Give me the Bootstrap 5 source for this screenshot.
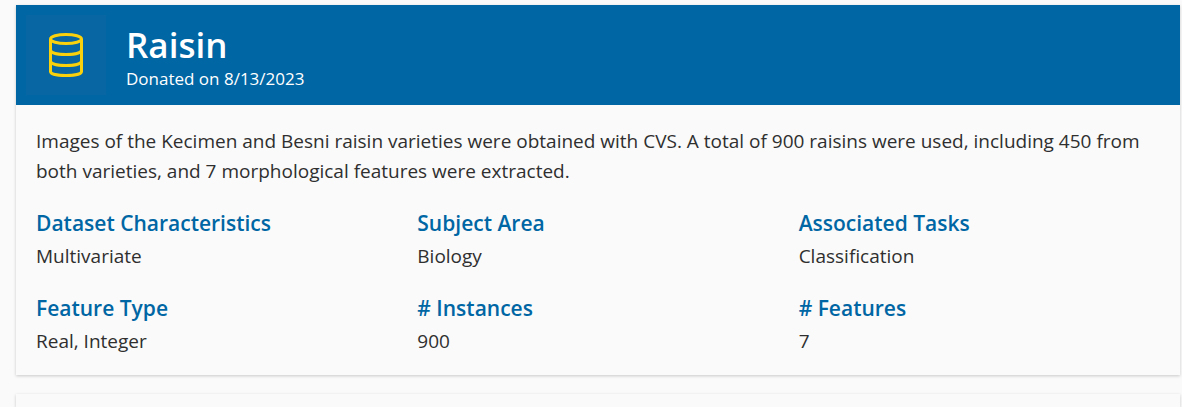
<!DOCTYPE html>
<html lang="en">
<head>
<meta charset="utf-8">
<meta name="viewport" content="width=device-width, initial-scale=1">
<title>Raisin</title>
<link href="https://cdn.jsdelivr.net/npm/bootstrap@5.3.0/dist/css/bootstrap.min.css" rel="stylesheet">
<style>
body{background:#fafafa;color:#2f2f2f;font-family:"Segoe UI","Open Sans","Noto Sans",sans-serif;font-size:19px;line-height:30px}
main{padding:5px 2px 0 16px}
.panel{background:#fafafa;box-shadow:0 1px 3px rgba(0,0,0,.2)}
.hero{background:#0066a4;color:#fff;padding:10px 20px 10px 10px;gap:20px}
.thumb{width:80px;height:80px;background:#0866a2}
.hero h1{font-size:35px;line-height:44px;font-weight:600}
.hero p{font-size:17px;line-height:24px}
.about{padding:21px 20px 19px}
.about > p{margin-bottom:22px}
.facts{--bs-gutter-x:20px;row-gap:22px}
.facts h2{font-size:21px;line-height:30px;font-weight:600;color:#0066a4;margin-bottom:3px}
.next-panel{margin-top:19px}
</style>
</head>
<body>
<main class="d-flex flex-column min-vh-100">
<section class="panel">
<header class="hero d-flex align-items-center">
<div class="thumb d-flex align-items-center justify-content-center flex-shrink-0"><svg width="40" height="46" viewBox="0 0 40 46" fill="none" stroke="#f9d10c" stroke-width="3" aria-hidden="true"><ellipse cx="20" cy="7" rx="15.5" ry="4.6"/><path d="M4.5 7v32.5c0 5.4 31 5.4 31 0V7M4.5 18c0 6 31 6 31 0M4.5 29c0 6 31 6 31 0"/></svg></div>
<div class="pt-1"><h1 class="mb-0">Raisin</h1><p class="mb-0">Donated on 8/13/2023</p></div>
</header>
<div class="about">
<p>Images of the Kecimen and Besni raisin varieties were obtained with CVS. A total of 900 raisins were used, including 450 from both varieties, and 7 morphological features were extracted.</p>
<div class="row facts">
<div class="col-4"><h2>Dataset Characteristics</h2><p class="mb-0">Multivariate</p></div>
<div class="col-4"><h2>Subject Area</h2><p class="mb-0">Biology</p></div>
<div class="col-4"><h2>Associated Tasks</h2><p class="mb-0">Classification</p></div>
<div class="col-4"><h2>Feature Type</h2><p class="mb-0">Real, Integer</p></div>
<div class="col-4"><h2># Instances</h2><p class="mb-0">900</p></div>
<div class="col-4"><h2># Features</h2><p class="mb-0">7</p></div>
</div></div></section>
<section class="panel next-panel flex-grow-1"></section>
</main>
<script src="https://cdn.jsdelivr.net/npm/bootstrap@5.3.0/dist/js/bootstrap.bundle.min.js"></script>
</body>
</html>
